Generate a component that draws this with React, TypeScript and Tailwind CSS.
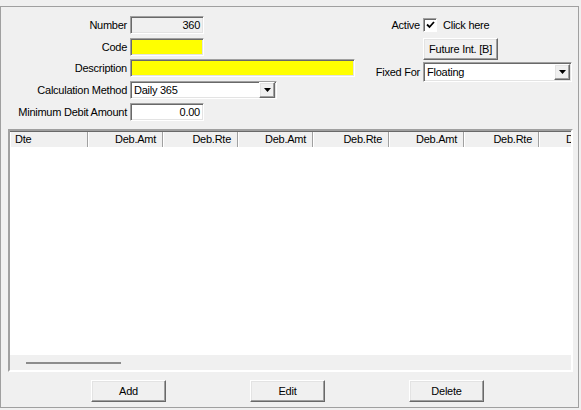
import React from "react";

const sunken =
  "border border-t-[#a0a0a0] border-l-[#a0a0a0] border-r-white border-b-white shadow-[inset_1px_1px_0_#696969,inset_-1px_-1px_0_#e3e3e3]";
const raised =
  "border border-t-white border-l-white border-r-[#696969] border-b-[#696969] shadow-[inset_-1px_-1px_0_#a0a0a0,inset_1px_1px_0_#e3e3e3]";

function Arrow() {
  return (
    <svg width="7" height="4" viewBox="0 0 7 4">
      <path d="M0 0h7L3.5 4z" fill="#000" />
    </svg>
  );
}

function Combo({ value, w }: { value: string; w: string }) {
  return (
    <div className={`${sunken} ${w} h-full bg-white flex items-center`}>
      <span className="flex-1 pl-[3px] truncate">{value}</span>
      <div
        className={`${raised} w-[16px] h-[16px] mr-[1px] bg-[#f0f0f0] flex items-center justify-center`}
      >
        <Arrow />
      </div>
    </div>
  );
}

function Row({ label, children, mt }: { label: string; children: React.ReactNode; mt: string }) {
  return (
    <div className={`flex items-center gap-[3px] h-[18px] ${mt}`}>
      <div className="w-[126px] text-right whitespace-nowrap">{label}</div>
      <div className="h-full flex items-center">{children}</div>
    </div>
  );
}

const cols = [
  { t: "Dte", w: "w-[78px]", left: true },
  { t: "Deb.Amt", w: "w-[75px]" },
  { t: "Deb.Rte", w: "w-[75px]" },
  { t: "Deb.Amt", w: "w-[75px]" },
  { t: "Deb.Rte", w: "w-[76px]" },
  { t: "Deb.Amt", w: "w-[75px]" },
  { t: "Deb.Rte", w: "w-[75px]" },
  { t: "Deb.Amt", w: "w-[75px]" },
];

export default function App() {
  return (
    <div
      className="w-[581px] h-[410px] bg-[#f0f0f0] overflow-hidden text-[11px] tracking-[-0.25px] text-black leading-none"
      style={{ fontFamily: '"Liberation Sans", Arial, sans-serif' }}
    >
      <div className="mt-[6px] w-[579px] h-[402px] border border-[#a0a0a0] flex flex-col">
        {/* top form */}
        <div className="h-[122px] flex">
          <div className="w-[354px] pt-[9px] flex flex-col">
            <Row label="Number" mt="mt-0">
              <div className={`${sunken} w-[74px] h-full bg-[#f0f0f0] flex items-center justify-end pr-[3px]`}>
                360
              </div>
            </Row>
            <Row label="Code" mt="mt-[4px]">
              <div className={`${sunken} w-[74px] h-full bg-[#ffff00]`} />
            </Row>
            <Row label="Description" mt="mt-[3px]">
              <div className={`${sunken} w-[225px] h-full bg-[#ffff00]`} />
            </Row>
            <Row label="Calculation Method" mt="mt-[4px]">
              <Combo value="Daily 365" w="w-[147px]" />
            </Row>
            <Row label="Minimum Debit Amount" mt="mt-[4px]">
              <div className={`${sunken} w-[74px] h-full bg-white flex items-center justify-end pr-[3px]`}>
                0.00
              </div>
            </Row>
          </div>
          <div className="pt-[9px] flex flex-col">
            <div className="flex items-center gap-[3px] h-[18px]">
              <div className="w-[65px] text-right">Active</div>
              <div className="flex items-center gap-[6px]">
                <div className="w-[14px] h-[14px] bg-white border border-t-[#a0a0a0] border-l-[#a0a0a0] border-r-white border-b-white shadow-[inset_1px_1px_0_#696969] flex items-center justify-center">
                  <svg width="9" height="8" viewBox="0 0 9 8">
                    <path d="M1 3.5l2.5 2.5L8 1" stroke="#000" strokeWidth="1.8" fill="none" />
                  </svg>
                </div>
                <span>Click here</span>
              </div>
            </div>
            <div className="flex items-center gap-[3px] h-[22px] mt-[4px]">
              <div className="w-[65px]" />
              <div className={`${raised} w-[75px] h-[22px] bg-[#f0f0f0] flex items-center justify-center`}>
                Future Int. [B]
              </div>
            </div>
            <div className="flex items-center gap-[3px] h-[20px] mt-[2px]">
              <div className="w-[65px] text-right whitespace-nowrap">Fixed For</div>
              <Combo value="Floating" w="w-[149px]" />
            </div>
          </div>
        </div>

        {/* grid */}
        <div className="ml-[7px] w-[565px] h-[243px] border-2 border-t-[#a0a0a0] border-l-[#a0a0a0] border-r-white border-b-white shadow-[inset_1px_1px_0_#696969] flex flex-col">
          <div className="h-[16px] bg-[#f0f0f0] flex overflow-hidden shrink-0 border-t border-[#696969]">
            {cols.map((c, i) => (
              <div
                key={i}
                className={`${c.w} shrink-0 h-full flex items-center border-r border-r-[#a0a0a0] border-l border-l-white ${
                  c.left ? "justify-start pl-[4px]" : "justify-end pr-[6px]"
                }`}
              >
                {c.t}
              </div>
            ))}
          </div>
          <div className="flex-1 bg-white" />
          <div className="h-[15px] bg-[#f0f0f0] shrink-0 relative">
            <div className="absolute left-[16px] top-[7px] w-[95px] h-[2px] bg-[#8c8c8c]" />
          </div>
        </div>

        {/* buttons */}
        <div className="mt-[8px] pl-[90px] flex gap-[84px]">
          {["Add", "Edit", "Delete"].map((b) => (
            <div
              key={b}
              className={`${raised} w-[75px] h-[22px] bg-[#f0f0f0] flex items-center justify-center`}
            >
              {b}
            </div>
          ))}
        </div>
      </div>
    </div>
  );
}
